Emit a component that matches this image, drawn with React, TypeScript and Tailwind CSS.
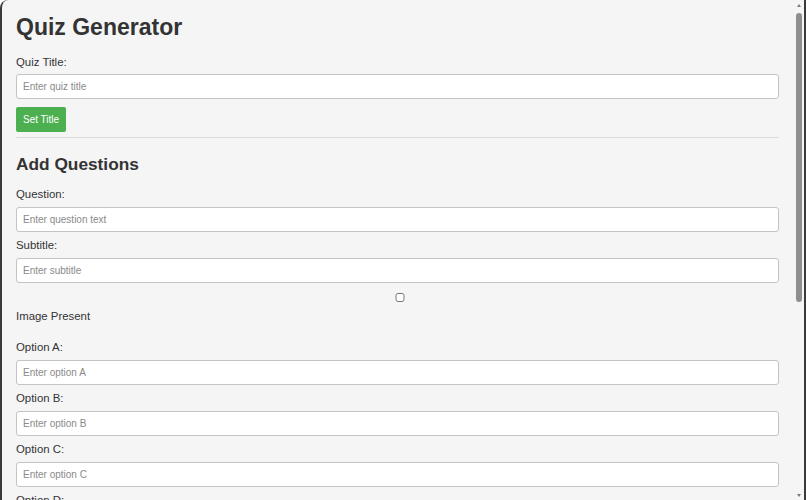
import React from "react";

const label = "block text-[11.4px] leading-[13px] text-[#333]";
const input =
  "block w-full h-[25px] rounded-[3px] border border-[#c4c4c4] bg-white px-[6px] text-[10px] text-[#333] placeholder:text-[#8a8a8a] outline-none";
const button =
  "block h-[25.3px] rounded-[2px] bg-[#4caf50] px-[7px] text-[10px] leading-[25px] text-white";

function Scrollbar() {
  return (
    <div className="flex w-[10px] shrink-0 flex-col items-center bg-[#f5f5f5]">
      <div className="mt-[3.5px] h-0 w-0 border-x-[2.8px] border-b-[3.8px] border-x-transparent border-b-[#7a7a7a]" />
      <div className="mt-[6.5px] h-[289px] w-[6.5px] rounded-full bg-[#8e8e8e]" />
      <div className="flex-1" />
      <div className="mb-[3.5px] h-0 w-0 border-x-[2.8px] border-t-[3.8px] border-x-transparent border-t-[#7a7a7a]" />
    </div>
  );
}

export default function App() {
  return (
    <div className="flex h-[500px] w-[806px] overflow-hidden rounded-tl-[8px] border-l-2 border-r-2 border-[#3a3a3a] bg-[#f5f5f5] font-['Liberation_Sans',Arial,sans-serif]">
      <div className="min-w-0 flex-1 overflow-hidden pl-[14px] pr-[15px] pt-[13.5px]">
        <h1 className="text-[23px] leading-[27px] font-bold text-[#333]">Quiz Generator</h1>

        <label className={label + " mt-[15.75px]"}>Quiz Title:</label>
        <input className={input + " mt-[4.75px]"} placeholder="Enter quiz title" />
        <button className={button + " mt-[7.5px]"}>Set Title</button>

        <div className="mt-[5.7px] h-px bg-[#dcdcdc]" />

        <h2 className="mt-[15.3px] text-[17.3px] leading-[20px] font-bold text-[#333]">Add Questions</h2>

        <label className={label + " mt-[14.5px]"}>Question:</label>
        <input className={input + " mt-[6px]"} placeholder="Enter question text" />

        <label className={label + " mt-[7px]"}>Subtitle:</label>
        <input className={input + " mt-[6px]"} placeholder="Enter subtitle" />

        <input type="checkbox" className="mt-[9.7px] ml-[5px] block h-[9px] w-[calc(100%-5px)]" />
        <label className={label + " mt-[8.5px]"}>Image Present</label>

        <label className={label + " mt-[17.4px]"}>Option A:</label>
        <input className={input + " mt-[6px]"} placeholder="Enter option A" />

        <label className={label + " mt-[7px]"}>Option B:</label>
        <input className={input + " mt-[6px]"} placeholder="Enter option B" />

        <label className={label + " mt-[7px]"}>Option C:</label>
        <input className={input + " mt-[6px]"} placeholder="Enter option C" />

        <label className={label + " mt-[7px]"}>Option D:</label>
        <input className={input + " mt-[6px]"} placeholder="Enter option D" />

        <label className={label + " mt-[7px]"}>Correct Answer:</label>
        <select className={input + " mt-[6px]"} defaultValue="A">
          <option value="A">A</option>
          <option value="B">B</option>
          <option value="C">C</option>
          <option value="D">D</option>
        </select>
        <button className={button + " mt-[7.5px]"}>Add Question</button>
      </div>
      <Scrollbar />
    </div>
  );
}
